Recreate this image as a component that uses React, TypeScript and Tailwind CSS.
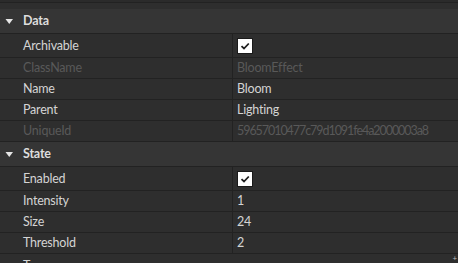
type Prop = {
  name: string;
  value?: string;
  check?: boolean;
  disabled?: boolean;
  mono?: boolean;
};

const sections: { title: string; props: Prop[] }[] = [
  {
    title: "Data",
    props: [
      { name: "Archivable", check: true },
      { name: "ClassName", value: "BloomEffect", disabled: true },
      { name: "Name", value: "Bloom" },
      { name: "Parent", value: "Lighting" },
      { name: "UniqueId", value: "59657010477c79d1091fe4a2000003a8", disabled: true, mono: true },
    ],
  },
  {
    title: "State",
    props: [
      { name: "Enabled", check: true },
      { name: "Intensity", value: "1" },
      { name: "Size", value: "24" },
      { name: "Threshold", value: "2" },
    ],
  },
];

function Checkbox() {
  return (
    <div className="w-4 h-4 bg-white border border-[#1a1a1a] flex items-center justify-center">
      <svg width="10" height="8" viewBox="0 0 10 8">
        <path d="M1.5 4.2 L4 6.5 L8.8 1.5" fill="none" stroke="#1e1e1e" strokeWidth="1.8" />
      </svg>
    </div>
  );
}

function Header({ title }: { title: string }) {
  return (
    <div className="h-[25px] flex items-center bg-[#353535] border-b border-[#222222]">
      <svg width="23" height="24" viewBox="0 0 23 24" className="shrink-0">
        <path d="M5.5 10 L13 10 L9.25 15 Z" fill="#e6e6e6" />
      </svg>
      <span className="font-bold text-[#dddddd] pt-px">{title}</span>
    </div>
  );
}

function Row({ p }: { p: Prop }) {
  const color = p.disabled ? "text-[#595959]" : "text-[#d4d4d4]";
  return (
    <div className={`flex border-b border-[#222222] ${p.check ? "h-[24px]" : "h-[21px]"}`}>
      <div className={`w-[233px] shrink-0 border-r border-[#222222] pl-[23px] pt-px flex items-center ${color}`}>
        {p.name}
      </div>
      <div className={`flex-1 pl-[4px] flex items-center ${color}`}>
        {p.check ? (
          <Checkbox />
        ) : (
          <span className={`pt-px ${p.mono ? "tracking-[-1.05px]" : ""}`}>{p.value}</span>
        )}
      </div>
    </div>
  );
}

export default function App() {
  return (
    <div
      className="w-[458px] h-[263px] overflow-hidden bg-[#2e2e2e] text-[12.5px] tracking-[-0.2px] relative"
      style={{ fontFamily: "Lato, 'Noto Sans', sans-serif" }}
    >
      <div className="h-[9px] flex flex-col">
        <div className="h-[2px] bg-[#2b2b2b]" />
        <div className="h-px bg-[#222222]" />
      </div>
      {sections.map((s) => (
        <div key={s.title}>
          <Header title={s.title} />
          {s.props.map((p) => (
            <Row key={p.name} p={p} />
          ))}
        </div>
      ))}
      <div className="h-[21px] flex">
        <div className="w-[233px] pl-[23px] pt-[3px] text-[#d4d4d4]">Tags</div>
      </div>
      <div className="absolute right-[1px] bottom-[1px] text-[#bbbbbb] text-[8px] leading-none">+</div>
    </div>
  );
}
